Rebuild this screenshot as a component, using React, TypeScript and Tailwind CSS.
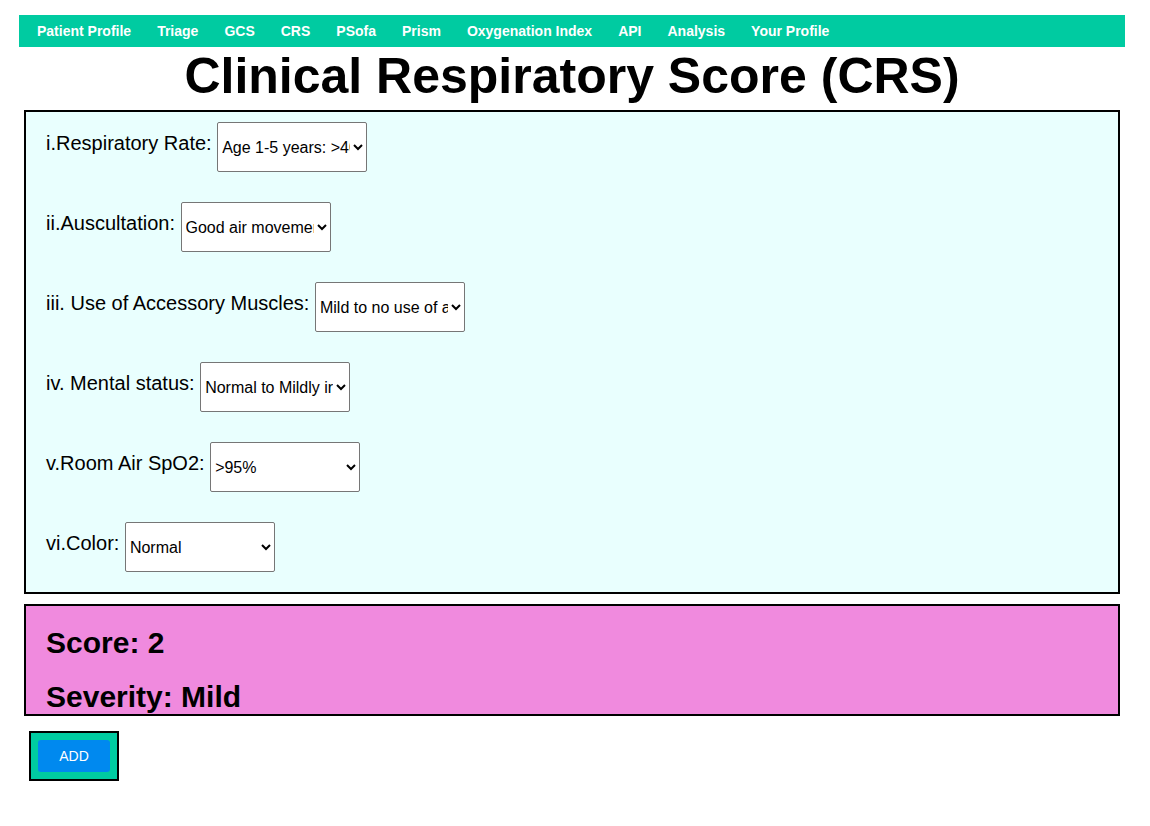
import React from 'react'

const navItems = [
  'Patient Profile',
  'Triage',
  'GCS',
  'CRS',
  'PSofa',
  'Prism',
  'Oxygenation Index',
  'API',
  'Analysis',
  'Your Profile',
]

type Field = { label: string; options: string[] }

const fields: Field[] = [
  {
    label: 'i.Respiratory Rate:',
    options: ['Age 1-5 years: >40', 'Age 1-5 years: 35-39', 'Age 1-5 years: <35'],
  },
  {
    label: 'ii.Auscultation:',
    options: ['Good air movement, scattered expiratory wheezing', 'Depressed air movement', 'Diminished or absent breath sounds'],
  },
  {
    label: 'iii. Use of Accessory Muscles:',
    options: ['Mild to no use of accessory muscles', 'Moderate intercostal retractions', 'Severe retractions'],
  },
  {
    label: 'iv. Mental status:',
    options: ['Normal to Mildly irritable', 'Irritable, agitated, restless', 'Lethargic'],
  },
  {
    label: 'v.Room Air SpO2:',
    options: ['>95%', '90-95%', '<90%'],
  },
  {
    label: 'vi.Color:',
    options: ['Normal', 'Pale', 'Cyanotic'],
  },
]

export default function App() {
  return (
    <div className="min-h-[826px] bg-white pt-[15px] font-['Liberation_Sans',Arial,sans-serif] text-black">
      <div className="ml-[19px] w-[1106px]">
        <nav className="flex h-[32px] items-center bg-[#00cba1] pl-[5px]">
          {navItems.map((item) => (
            <a key={item} className="px-[13px] text-[14px] font-bold leading-[32px] text-white">
              {item}
            </a>
          ))}
        </nav>

        <h1 className="h-[63px] text-center text-[50px] font-bold leading-[58px]">
          Clinical Respiratory Score (CRS)
        </h1>

        <div className="mx-[5px] flex flex-col gap-[30px] border-2 border-black bg-[#e9fffe] pt-[10px] pb-[20px] pl-[20px]">
          {fields.map((field) => (
            <div key={field.label} className="flex h-[50px] items-start">
              <label className="pt-[10px] text-[20px] leading-[23px]">{field.label}</label>
              <select
                defaultValue={field.options[0]}
                className="ml-[5.56px] h-[50px] w-[150px] rounded-[2px] border border-[#767676] bg-white font-['Liberation_Sans',Arial,sans-serif] text-[16px] text-black"
              >
                {field.options.map((opt) => (
                  <option key={opt} value={opt}>
                    {opt}
                  </option>
                ))}
              </select>
            </div>
          ))}
        </div>

        <div className="mx-[5px] mt-[10px] flex h-[112px] flex-col gap-[19px] overflow-hidden border-2 border-black bg-[#f08ade] pt-[19px] pl-[20px]">
          <h2 className="text-[30px] font-bold leading-[35px]">Score: 2</h2>
          <h2 className="text-[30px] font-bold leading-[35px]">Severity: Mild</h2>
        </div>

        <div className="mt-[15px] ml-[10px] w-[90px] border-2 border-black bg-[#00cba1] p-[7px]">
          <button className="h-[32px] w-[72px] rounded-[3px] bg-[#0089ef] text-[14px] text-white">ADD</button>
        </div>
      </div>
    </div>
  )
}
